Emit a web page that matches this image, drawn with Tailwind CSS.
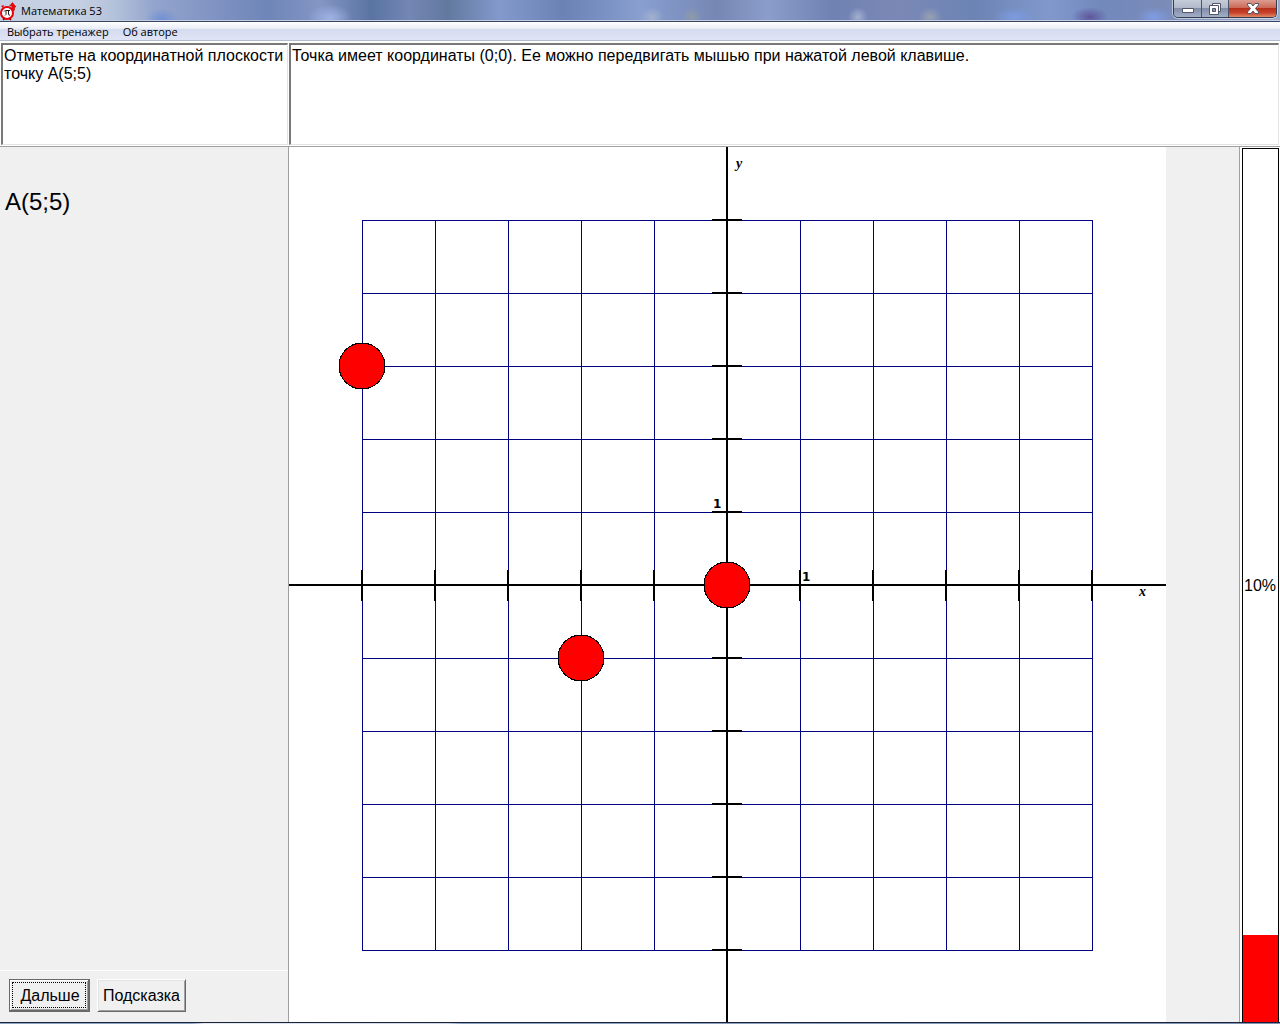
<!DOCTYPE html>
<html lang="ru">
<head>
    <meta charset="UTF-8">
    <meta name="viewport" content="width=device-width, initial-scale=1.0">
    <title>Математика 53</title>
    <script src="https://cdn.jsdelivr.net/npm/@tailwindcss/browser@4"></script>
</head>
<body class="h-screen flex flex-col overflow-hidden bg-white text-black text-[16px] leading-[18px] font-['Liberation_Sans',Arial,sans-serif]">
    <!-- Title bar -->
    <header class="relative h-[22px] shrink-0 flex items-center justify-between border-b border-[#3b4560] shadow-[inset_0_-1px_#c3cee4] bg-[radial-gradient(ellipse_16px_12px_at_162px_20px,#6f8fd4,transparent),radial-gradient(ellipse_22px_14px_at_330px_18px,#9fb2e6,transparent),radial-gradient(ellipse_12px_10px_at_652px_17px,#a3b0d0,transparent),radial-gradient(ellipse_10px_10px_at_692px_17px,#8e9aa8,transparent),radial-gradient(ellipse_10px_10px_at_858px_17px,#a3b0d0,transparent),radial-gradient(ellipse_12px_10px_at_930px_17px,#98a0b2,transparent),radial-gradient(ellipse_20px_10px_at_1014px_17px,#7c9be0,transparent),radial-gradient(ellipse_18px_10px_at_1090px_17px,#5f569a,transparent),radial-gradient(ellipse_18px_10px_at_1154px_17px,#7f9ce4,transparent),linear-gradient(90deg,#c4d0e2_0%,#c6d1e2_6%,#b3c1da_9%,#93a5cd_12%,#7f92c2_17%,#6e86b8_21%,#8496c4_25%,#5a74a2_29%,#7486b4_32%,#62799f_35%,#8399cc_39%,#6a83b4_44%,#889fd0_50%,#7687b4_56%,#8b9dca_60%,#6f82b2_65%,#7b88b6_70%,#6c84b4_76%,#8098cc_82%,#7289bc_86%,#7a8bb8_91%,#9cabc8_100%)]">
        <div class="flex items-center gap-1">
            <svg class="w-[17px] h-[20px]" viewBox="0 0 17 20" aria-hidden="true">
                <path d="M10 8 12 6.500V5H9.500L12.500 1.500 16 6H14.500V9L12.500 11Z" fill="#f00" stroke="#900" stroke-width=".5"/>
                <path d="M1 5 4 4 3 7Z" fill="#e00"/>
                <circle cx="7" cy="12" r="6" fill="#fff" stroke="#e8000c" stroke-width="2"/>
                <path d="M3 19 4.500 17.500M11 19 9.500 17.500" stroke="#900" stroke-width="1.500"/>
                <path d="M4 10.500Q4.500 9.500 5.500 9.500H10M6 10V13.500L5 14.500M8.500 10V13.500Q8.500 14.500 10 14" fill="none" stroke="#222"/>
            </svg>
            <h1 class="text-[11px] leading-[18px] font-['Open_Sans','Noto_Sans',sans-serif]">Математика 53</h1>
        </div>
        <div class="mr-[3px] h-[18px] self-start flex rounded-b-[5px] border border-t-0 border-[#353c4c] shadow-[0_0_0_1px_#ffffff80] overflow-hidden">
            <button aria-label="Свернуть" class="w-[28px] flex items-center justify-center border-r border-[#4d5568] bg-[linear-gradient(#c5ccd8_0%,#b1bacb_45%,#828da7_50%,#a2afc8_100%)]">
                <svg class="w-[12px] h-[12px]" viewBox="0 0 12 12"><path d="M.5 5.500H11.500V9.500H.5Z" fill="#fff" stroke="#535666"/></svg>
            </button>
            <button aria-label="Восстановить" class="w-[27px] flex items-center justify-center border-r border-[#4d5568] bg-[linear-gradient(#c5ccd8_0%,#b1bacb_45%,#828da7_50%,#a2afc8_100%)]">
                <svg class="w-[12px] h-[12px]" viewBox="0 0 12 12"><path d="M3.500 .5H11.500V8.500H3.500Z" fill="#fff" stroke="#535666"/><path d="M.5 2.500H9.500V11.500H.5Z" fill="#fff" stroke="#535666"/><path d="M3.500 5.500H6.500V8.500H3.500Z" fill="#8893ac" stroke="#535666"/></svg>
            </button>
            <button aria-label="Закрыть" class="w-[47px] flex items-center justify-center bg-[linear-gradient(#dc9d91_0%,#cd6a58_45%,#b8301a_50%,#c8422a_75%,#df8a68_100%)]">
                <svg class="w-[12px] h-[11px]" viewBox="0 0 12 11"><path d="M.5 .5H4L6 3 8 .5H11.500V2L8.500 5.500 11.500 9V10.500H8L6 8 4 10.500H.5V9L3.500 5.500 .5 2Z" fill="#fff" stroke="#535666"/></svg>
            </button>
        </div>
    </header>

    <!-- Menu -->
    <nav class="h-[19px] shrink-0 flex items-center gap-[14px] px-[7px] pt-px border-b border-[#b6bccc] bg-[linear-gradient(#ffffff_0%,#e8ecf5_38%,#d5dbee_40%,#dfe5f6_100%)] text-[11px] leading-[18px] font-['Open_Sans','Noto_Sans',sans-serif]">
        <button>Выбрать тренажер</button>
        <button>Об авторе</button>
    </nav>

    <!-- Task and hint -->
    <section class="h-[106px] shrink-0 flex pt-[2px] pb-px px-px border-b border-[#a0a0a0] bg-white">
        <textarea readonly aria-label="Задание" class="w-[287px] mr-px shrink-0 resize-none outline-none overflow-hidden p-px pt-[2px] bg-white border-2 border-t-[#787878] border-l-[#787878] border-r border-b border-r-[#e3e3e3] border-b-[#e3e3e3]">Отметьте на координатной плоскости точку A(5;5)</textarea>
        <textarea readonly aria-label="Пояснение" class="flex-1 min-w-0 resize-none outline-none overflow-hidden p-px pt-[2px] bg-white border-2 border-t-[#787878] border-l-[#787878] border-r border-b border-r-[#e3e3e3] border-b-[#e3e3e3]">Точка имеет координаты (0;0). Ее можно передвигать мышью при нажатой левой клавише.</textarea>
    </section>

    <main class="flex-1 min-h-0 flex">
        <aside class="w-[289px] shrink-0 flex flex-col border-r border-[#a0a0a0] bg-[#f0f0f0]">
            <p class="flex-1 px-[5px] pt-[41px] text-[24px] leading-[28px]">A(5;5)</p>
            <div class="flex gap-[7px] h-[52px] px-[9px] pt-[8px] border-t border-white">
                <button class="w-[81px] h-[33px] p-[2px] border border-[#696969] border-r-2 border-b-2 shadow-[inset_1px_1px_#fff,inset_-1px_-1px_#a0a0a0]"><span class="flex h-full items-center justify-center pt-px pl-[2px] border border-dotted border-black">Дальше</span></button>
                <button class="w-[89px] h-[33px] border border-t-white border-l-white border-r-[#696969] border-b-[#696969] shadow-[inset_1px_1px_#e3e3e3,inset_-1px_-1px_#a0a0a0]">Подсказка</button>
            </div>
        </aside>

        <!-- Coordinate plane, one unit is 73 -->
        <div class="flex-1 min-w-0 flex bg-[#f0f0f0]">
            <svg id="plane" class="h-full bg-white" viewBox="0 0 877 875">
                <g id="grid" class="stroke-[#000080]" shape-rendering="crispEdges"></g>
                <g id="ticks" class="stroke-black stroke-2" shape-rendering="crispEdges">
                    <path d="M438 0V875M0 438H877"/>
                </g>
                <g class="text-[12px] font-bold font-['DejaVu_Sans',sans-serif]">
                    <text x="424" y="361">1</text>
                    <text x="513" y="434">1</text>
                </g>
                <g class="text-[14px] italic font-bold font-['Liberation_Serif',serif]">
                    <text x="447" y="21">y</text>
                    <text x="850" y="449">x</text>
                </g>
                <g id="points" class="fill-[#ff0000] stroke-black cursor-pointer"></g>
            </svg>
        </div>

        <!-- Progress -->
        <div class="relative w-[41px] shrink-0 flex pl-[2px] pt-px pr-px border-l border-[#a0a0a0] bg-white">
            <div class="flex-1 flex flex-col justify-end border border-b-0 border-black">
                <div class="bg-[#ff0000]" style="height: 10%"></div>
            </div>
            <span class="absolute inset-x-0 top-1/2 pt-[2px] -translate-y-1/2 text-center">10%</span>
        </div>
    </main>
    <footer class="h-[2px] shrink-0 border-t border-[#1c2336] bg-[linear-gradient(90deg,#8fa5c8_0%,#8fa5c8_15%,#e4e9f2_16%,#c9d2e2_35%,#8fa5c8_36%,#7e92b8_100%)]"></footer>

    <script>
        const unit = 73;
        const center = 438;
        const grid = document.getElementById('grid');
        const ticks = document.getElementById('ticks');
        const pointsGroup = document.getElementById('points');

        const points = [[-5, 3], [-2, -1], [0, 0]];

        function add(parent, name, attrs) {
            const el = document.createElementNS('http://www.w3.org/2000/svg', name);
            for (const key in attrs) el.setAttribute(key, attrs[key]);
            parent.appendChild(el);
            return el;
        }

        for (let i = -5; i <= 5; i++) {
            const p = center + i * unit;
            add(grid, 'path', { d: `M${p + 0.5} 73V804M73 ${p + 0.5}H804` });
            if (i !== 0) {
                add(ticks, 'path', { d: `M${p} 423V454M423 ${p}H453` });
            }
        }

        points.forEach(([x, y]) => {
            add(pointsGroup, 'circle', { cx: center + x * unit, cy: center - y * unit, r: 23, 'shape-rendering': 'crispEdges' });
        });

        // The last point can be dragged with the left button
        const plane = document.getElementById('plane');
        const active = pointsGroup.lastElementChild;
        active.addEventListener('pointerdown', (e) => active.setPointerCapture(e.pointerId));
        active.addEventListener('pointermove', (e) => {
            if (e.buttons !== 1) return;
            const pos = new DOMPoint(e.clientX, e.clientY).matrixTransform(plane.getScreenCTM().inverse());
            active.setAttribute('cx', pos.x);
            active.setAttribute('cy', pos.y);
        });
    </script>
</body>
</html>
